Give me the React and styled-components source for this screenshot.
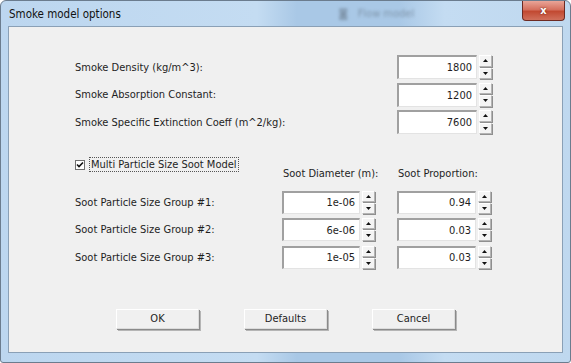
import React, { useState } from 'react'
import styled, { createGlobalStyle } from 'styled-components'

const GlobalStyle = createGlobalStyle`
    html, body {
        margin: 0;
        padding: 0;
        background: #ffffff;
    }
    body {
        font-family: Tahoma, "DejaVu Sans Condensed", "DejaVu Sans", sans-serif;
        font-stretch: condensed;
        font-size: 11px;
        color: #1e1e1e;
    }
`

const Frame = styled.div`
    box-sizing: border-box;
    width: 571px;
    height: 363px;
    display: flex;
    flex-direction: column;
    padding: 0 7px 9px 7px;
    border: 1px solid #6b7c8e;
    border-radius: 6px 6px 3px 3px;
    background: linear-gradient(90deg, #bcd6ef 0%, #c4dcf2 45%, #a9c8e6 52%, #a9c8e6 70%, #c4dcf2 78%, #bfd8ef 100%);
    overflow: hidden;
`

const TitleBar = styled.div`
    height: 25px;
    display: flex;
    align-items: center;
    justify-content: space-between;
`

const Title = styled.span`
    font-size: 11.5px;
    color: #111;
    padding-left: 1px;
`

const Ghost = styled.span`
    color: #7f95ab;
    filter: blur(1.4px);
    margin-left: 110px;
    font-size: 11px;
`

const CloseButton = styled.div`
    width: 41px;
    height: 19px;
    margin-top: -6px;
    margin-right: -2px;
    border: 1px solid #6d2a22;
    border-top: none;
    border-radius: 0 0 4px 4px;
    background: linear-gradient(180deg, #e9a598 0%, #d5705e 45%, #c24a32 55%, #d0705c 100%);
    display: flex;
    align-items: center;
    justify-content: center;
    color: #fff;
    font-family: "DejaVu Sans", sans-serif;
    font-weight: bold;
    font-size: 11px;
    text-shadow: 0 0 2px #5a1a10;
`

const Client = styled.div`
    flex: 1;
    background: #f0f0f0;
    border: 1px solid #8aa0b6;
    display: flex;
    flex-direction: column;
    padding: 28px 0 0 66px;
`

const TopGrid = styled.div`
    display: grid;
    grid-template-columns: 322px auto;
    grid-auto-rows: 24px;
    row-gap: 3.5px;
    align-items: center;
`

const Label = styled.span`
    font-size: 11px;
    white-space: nowrap;
`

const SootGrid = styled.div`
    display: grid;
    grid-template-columns: 207px 115px auto;
    grid-template-rows: 30px repeat(3, 23px);
    row-gap: 4.5px;
    align-items: center;
    margin-top: 22px;
`

const CheckRow = styled.label`
    align-self: start;
    display: flex;
    align-items: center;
    gap: 4px;
    height: 15px;
    margin-top: 1px;
`

const CheckBox = styled.span`
    box-sizing: border-box;
    width: 10px;
    height: 10px;
    border: 1px solid #707070;
    background: #fff;
    display: flex;
    align-items: center;
    justify-content: center;
`

const FocusLabel = styled.span`
    border: 1px dotted #555;
    padding: 0 1px;
    line-height: 13px;
`

const Header = styled.span`
    align-self: end;
    margin-bottom: 6px;
    margin-left: 1px;
`

const Spin = styled.div`
    display: flex;
    align-items: center;
    gap: 2px;
    height: ${p => p.$h}px;
`

const Field = styled.div`
    box-sizing: border-box;
    width: ${p => p.$w}px;
    height: 100%;
    background: #fff;
    border-top: 2px solid #a0a0a0;
    border-left: 2px solid #a0a0a0;
    border-right: 1px solid #e3e3e3;
    border-bottom: 1px solid #e3e3e3;
    display: flex;
    align-items: center;
    justify-content: flex-end;
    padding-right: 4px;
`

const Arrows = styled.div`
    display: flex;
    flex-direction: column;
    gap: 1px;
    height: 100%;
`

const ArrowBtn = styled.button`
    box-sizing: border-box;
    flex: 1;
    width: 13px;
    padding: 0;
    background: #f4f4f4;
    border: 1px solid #b4b4b4;
    border-top-color: #fff;
    border-left-color: #fff;
    box-shadow: 1px 1px 0 #8f8f8f;
    display: flex;
    align-items: center;
    justify-content: center;
`

const Buttons = styled.div`
    display: flex;
    justify-content: center;
    gap: 45px;
    margin-top: 40px;
    margin-left: -66px;
`

const PushButton = styled.button`
    box-sizing: border-box;
    width: 83px;
    height: 20px;
    padding: 0;
    font-family: inherit;
    font-stretch: inherit;
    font-size: 11px;
    color: #1e1e1e;
    background: #f0f0f0;
    border: 1px solid #dcdcdc;
    border-top-color: #ffffff;
    border-left-color: #ffffff;
    box-shadow: 1px 1px 0 #8a8a8a, 2px 2px 0 #b5b5b5;
`

function Tri({ up }) {
    return (
        <svg width="5" height="3" viewBox="0 0 5 3">
            <polygon points={up ? '2.5,0 5,3 0,3' : '0,0 5,0 2.5,3'} fill="#111" />
        </svg>
    )
}

function SpinBox({ value, width = 80, height = 24 }) {
    return (
        <Spin $h={height}>
            <Field $w={width}>{value}</Field>
            <Arrows>
                <ArrowBtn><Tri up /></ArrowBtn>
                <ArrowBtn><Tri /></ArrowBtn>
            </Arrows>
        </Spin>
    )
}

const smokeRows = [
    ['Smoke Density (kg/m^3):', '1800'],
    ['Smoke Absorption Constant:', '1200'],
    ['Smoke Specific Extinction Coeff (m^2/kg):', '7600'],
]

const sootRows = [
    ['Soot Particle Size Group #1:', '1e-06', '0.94'],
    ['Soot Particle Size Group #2:', '6e-06', '0.03'],
    ['Soot Particle Size Group #3:', '1e-05', '0.03'],
]

export default function App() {
    const [multi] = useState(true)
    return (
        <>
            <GlobalStyle />
            <Frame>
                <TitleBar>
                    <Title>Smoke model options</Title>
                    <Ghost>◙&nbsp;&nbsp;&nbsp;Flow model</Ghost>
                    <CloseButton>x</CloseButton>
                </TitleBar>
                <Client>
                    <TopGrid>
                        {smokeRows.map(([label, v]) => (
                            <React.Fragment key={label}>
                                <Label>{label}</Label>
                                <SpinBox value={v} />
                            </React.Fragment>
                        ))}
                    </TopGrid>
                    <SootGrid>
                        <CheckRow>
                            <CheckBox>
                                {multi && (
                                    <svg width="8" height="8" viewBox="0 0 8 8">
                                        <path d="M1 3.5 L3 5.5 L7 1.5" stroke="#111" strokeWidth="1.6" fill="none" />
                                    </svg>
                                )}
                            </CheckBox>
                            <FocusLabel>Multi Particle Size Soot Model</FocusLabel>
                        </CheckRow>
                        <Header>Soot Diameter (m):</Header>
                        <Header>Soot Proportion:</Header>
                        {sootRows.map(([label, d, p]) => (
                            <React.Fragment key={label}>
                                <Label>{label}</Label>
                                <SpinBox value={d} width={78} height={23} />
                                <SpinBox value={p} width={79} height={23} />
                            </React.Fragment>
                        ))}
                    </SootGrid>
                    <Buttons>
                        <PushButton>OK</PushButton>
                        <PushButton>Defaults</PushButton>
                        <PushButton>Cancel</PushButton>
                    </Buttons>
                </Client>
            </Frame>
        </>
    )
}
